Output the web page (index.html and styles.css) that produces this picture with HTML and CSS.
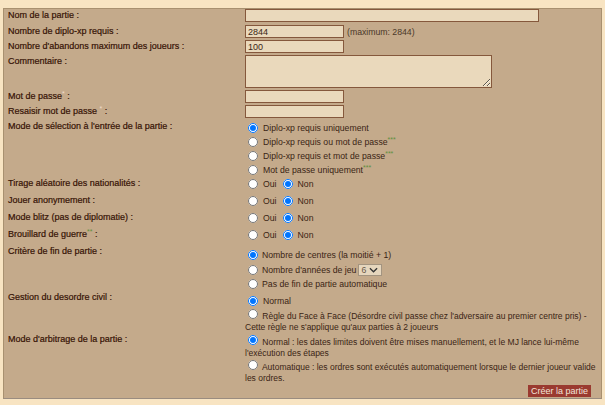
FILE: index.html
```html
<!DOCTYPE html>
<html lang="fr">
<head>
<meta charset="utf-8">
<title>Créer une partie</title>
<link rel="stylesheet" href="styles.css">
</head>
<body>
<form class="panel">
  <div class="row r1">
    <div class="lbl">Nom de la partie :</div>
    <div class="fld"><input class="in in-long" type="text"></div>
  </div>
  <div class="row r2">
    <div class="lbl">Nombre de diplo-xp requis :</div>
    <div class="fld inline"><input class="in in-short" type="text" value="2844"><span class="hint">(maximum: 2844)</span></div>
  </div>
  <div class="row r2">
    <div class="lbl">Nombre d'abandons maximum des joueurs :</div>
    <div class="fld"><input class="in in-short" type="text" value="100"></div>
  </div>
  <div class="row r-area">
    <div class="lbl">Commentaire :</div>
    <div class="fld"><textarea class="in area"></textarea></div>
  </div>
  <div class="row r2">
    <div class="lbl">Mot de passe<sup class="ast pale">*</sup> :</div>
    <div class="fld"><input class="in in-short" type="password"></div>
  </div>
  <div class="row r2">
    <div class="lbl">Resaisir mot de passe <sup class="ast pale">*</sup> :</div>
    <div class="fld"><input class="in in-short" type="password"></div>
  </div>
  <div class="row r-mode">
    <div class="lbl">Mode de sélection à l'entrée de la partie :</div>
    <div class="fld">
      <div class="opt"><input type="radio" name="mode" checked><span>Diplo-xp requis uniquement</span></div>
      <div class="opt"><input type="radio" name="mode"><span>Diplo-xp requis ou mot de passe<sup class="ast">***</sup></span></div>
      <div class="opt"><input type="radio" name="mode"><span>Diplo-xp requis et mot de passe<sup class="ast">***</sup></span></div>
      <div class="opt"><input type="radio" name="mode"><span>Mot de passe uniquement<sup class="ast">***</sup></span></div>
    </div>
  </div>
  <div class="row r-bin">
    <div class="lbl">Tirage aléatoire des nationalités :</div>
    <div class="fld"><div class="opt bin"><input type="radio" name="tirage"><span>Oui</span><input type="radio" name="tirage" checked><span>Non</span></div></div>
  </div>
  <div class="row r-bin">
    <div class="lbl">Jouer anonymement :</div>
    <div class="fld"><div class="opt bin"><input type="radio" name="anon"><span>Oui</span><input type="radio" name="anon" checked><span>Non</span></div></div>
  </div>
  <div class="row r-bin">
    <div class="lbl">Mode blitz (pas de diplomatie) :</div>
    <div class="fld"><div class="opt bin"><input type="radio" name="blitz"><span>Oui</span><input type="radio" name="blitz" checked><span>Non</span></div></div>
  </div>
  <div class="row r-bin">
    <div class="lbl">Brouillard de guerre<sup class="ast">**</sup> :</div>
    <div class="fld"><div class="opt bin"><input type="radio" name="fog"><span>Oui</span><input type="radio" name="fog" checked><span>Non</span></div></div>
  </div>
  <div class="row r-fin">
    <div class="lbl">Critère de fin de partie :</div>
    <div class="fld">
      <div class="opt tight"><input type="radio" name="fin" checked><span>Nombre de centres (la moitié + 1)</span></div>
      <div class="opt tight tall"><input type="radio" name="fin"><span>Nombre d'années de jeu</span><span class="sel"><span class="sel-val">6</span><svg class="chev" viewBox="0 0 10 6" width="9" height="6"><path d="M1 1 L5 5 L9 1" fill="none" stroke="#333" stroke-width="1.4"/></svg></span></div>
      <div class="opt tight"><input type="radio" name="fin"><span>Pas de fin de partie automatique</span></div>
    </div>
  </div>
  <div class="row r-civil">
    <div class="lbl">Gestion du desordre civil :</div>
    <div class="fld">
      <div class="opt"><input type="radio" name="civil" checked><span>Normal</span></div>
      <div class="wrap"><input type="radio" name="civil"> Règle du Face à Face (Désordre civil passe chez l'adversaire au premier centre pris) - Cette règle ne s'applique qu'aux parties à 2 joueurs</div>
    </div>
  </div>
  <div class="row r-arb">
    <div class="lbl">Mode d'arbitrage de la partie :</div>
    <div class="fld">
      <div class="wrap"><input type="radio" name="arb" checked> Normal : les dates limites doivent être mises manuellement, et le MJ lance lui-même l'exécution des étapes</div>
      <div class="wrap"><input type="radio" name="arb"> Automatique : les ordres sont exécutés automatiquement lorsque le dernier joueur valide les ordres.</div>
    </div>
  </div>
  <div class="actions">
    <button type="button" class="btn">Créer la partie</button>
  </div>
</form>
</body>
</html>
```
FILE: styles.css
```css
html, body {
  margin: 0;
  padding: 0;
  background: #f8e4c2;
}
body {
  padding: 8px 3px 7px 3px;
  font-family: "Liberation Sans", Arial, sans-serif;
  font-size: 9px;
  color: #3a2616;
}
*, *::before, *::after { box-sizing: border-box; }
.panel {
  background: #c4aa8b;
  border: 1px solid #a8906f;
  border-bottom-color: #9a8c80;
  padding: 0 4px 1px 4px;
}
.row {
  display: grid;
  grid-template-columns: 237px 1fr;
  align-items: start;
}
.lbl {
  color: #361205;
  line-height: 11px;
  padding-top: 1px;
  white-space: nowrap;
  -webkit-text-stroke: 0.2px #361205;
}
.r1 { height: 16px; }
.r2 { height: 15px; }
.r-area { height: 35px; }
.fld {
  min-width: 0;
  font-size: 8.7px;
  color: #3a2414;
}
.inline { display: flex; align-items: center; gap: 3px; }
.in {
  height: 13px;
  margin: 0;
  padding: 0 2px;
  border: 1px solid #85583c;
  background: #ead9bc;
  font-family: "Liberation Sans", Arial, sans-serif;
  font-size: 9px;
  color: #3a2616;
  outline: none;
}
.in-long { width: 294px; }
.in-short { width: 99px; }
.area {
  display: block;
  width: 247px;
  height: 33px;
  resize: both;
}
.hint { color: #4a3828; }
.ast {
  color: #5f9040;
  font-size: 7px;
  line-height: 0;
  vertical-align: 3px;
  font-weight: normal;
  -webkit-text-stroke: 0;
}
.ast.pale { color: #f0dccb; }
.opt {
  display: flex;
  align-items: center;
  height: 14px;
  white-space: nowrap;
}
.opt input[type="radio"] {
  width: 10px;
  height: 10px;
  margin: 0 5px 0 3px;
  flex: none;
}
.bin input[type="radio"] + span + input[type="radio"] { margin-left: 6px; }
.r-mode { height: 57px; padding-top: 1px; }
.r-mode .lbl { margin-top: -1px; }
.r-bin { height: 17px; }
.r-fin { height: 46px; padding-top: 3px; }
.r-fin .lbl { margin-top: -3px; }
.opt.tight input[type="radio"] { margin-right: 4px; }
.opt.tall { height: 15px; }
.sel {
  display: inline-flex;
  align-items: center;
  justify-content: space-between;
  width: 24px;
  height: 12px;
  margin-left: 2px;
  padding: 0 3px 0 2px;
  border: 1px solid #a39480;
  background: #e6d6bd;
  color: #6a5a4a;
}
.chev { display: block; }
.wrap {
  line-height: 11px;
  font-size: 8.5px;
}
.wrap input[type="radio"] {
  width: 10px;
  height: 10px;
  margin: 1px 2px 0 3px;
  vertical-align: baseline;
}
.r-civil { height: 42px; padding-top: 3px; }
.r-civil .lbl { margin-top: -3px; }
.r-arb { padding-top: 1px; }
.r-arb .lbl { margin-top: -1px; }
.actions {
  display: flex;
  justify-content: flex-end;
  padding: 1px 6px 0 0;
}
.btn {
  margin: 0;
  padding: 0 3px;
  height: 12px;
  border: none;
  background: #9a3a30;
  color: #f2e4d8;
  font-family: "Liberation Sans", Arial, sans-serif;
  font-size: 9px;
  line-height: 12px;
  cursor: pointer;
}
```
